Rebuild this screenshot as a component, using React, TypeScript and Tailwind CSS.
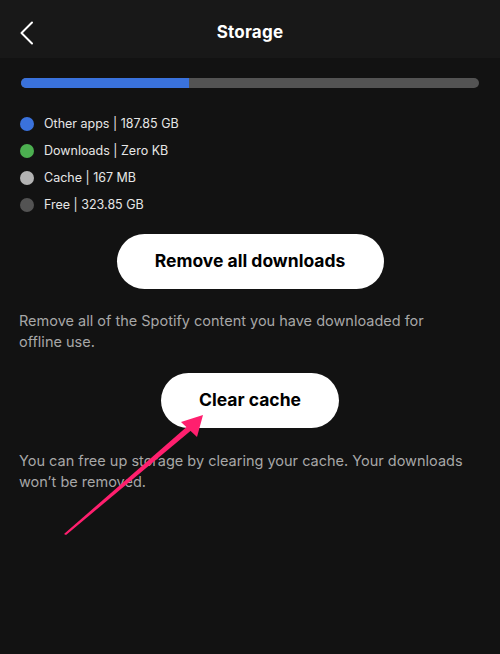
const legend = [
  { color: 'bg-[#3a72dc]', label: 'Other apps | 187.85 GB' },
  { color: 'bg-[#4caf50]', label: 'Downloads | Zero KB' },
  { color: 'bg-[#b3b3b3]', label: 'Cache | 167 MB' },
  { color: 'bg-[#535353]', label: 'Free | 323.85 GB' },
];

export default function App() {
  return (
    <div
      className="relative w-[500px] h-[654px] bg-[#121212] text-white overflow-hidden"
      style={{ fontFamily: 'Inter, "Noto Sans", sans-serif' }}
    >
      {/* Header */}
      <div className="relative h-[58px] pt-[8px] bg-[#181818] flex items-center justify-center">
        <button type="button" className="absolute left-[19px] top-[21px]">
          <svg width="16" height="24" viewBox="0 0 16 24" fill="none">
            <path d="M13 1.5 L2.5 12 L13 22.5" stroke="white" strokeWidth="2" strokeLinecap="round" strokeLinejoin="round" />
          </svg>
        </button>
        <h1 className="text-[17px] font-bold tracking-[0.2px]">Storage</h1>
      </div>

      <div className="px-[21px]">
        {/* Usage bar */}
        <div className="mt-[20px] h-[10px] w-[458px] rounded-full bg-[#535353] overflow-hidden flex">
          <div className="h-full w-[168px] bg-[#3a72dc]" />
        </div>

        {/* Legend */}
        <div className="mt-[29px] flex flex-col gap-[13px] -ml-[1px]">
          {legend.map((item) => (
            <div key={item.label} className="flex items-center gap-[10px] h-[14px]">
              <span className={`w-[14px] h-[14px] rounded-full ${item.color}`} />
              <span className="text-[12.5px] text-[#e6e6e6]">{item.label}</span>
            </div>
          ))}
        </div>

        {/* Remove downloads */}
        <div className="mt-[22px] flex justify-center">
          <button type="button" className="w-[267px] h-[55px] rounded-full bg-white text-black text-[17.5px] font-bold">
            Remove all downloads
          </button>
        </div>
        <p className="mt-[21px] w-[440px] text-[14.5px] leading-[21px] text-[#a7a7a7] -ml-[2px]">
          Remove all of the Spotify content you have downloaded for offline use.
        </p>

        {/* Clear cache */}
        <div className="mt-[21px] flex justify-center">
          <button type="button" className="w-[178px] h-[55px] rounded-full bg-white text-black text-[17.5px] font-bold">
            Clear cache
          </button>
        </div>
        <p className="mt-[22px] w-[450px] text-[14.5px] leading-[21px] text-[#a7a7a7] -ml-[2px]">
          You can free up storage by clearing your cache. Your downloads won’t be removed.
        </p>
      </div>

      {/* Annotation arrow */}
      <svg className="absolute inset-0 pointer-events-none" width="500" height="654" viewBox="0 0 500 654">
        <polygon points="64,534 66,535 194,428 190,424" fill="#ff1f6e" />
        <polygon points="203,415 181,422 197,437" fill="#ff1f6e" />
      </svg>
    </div>
  );
}
